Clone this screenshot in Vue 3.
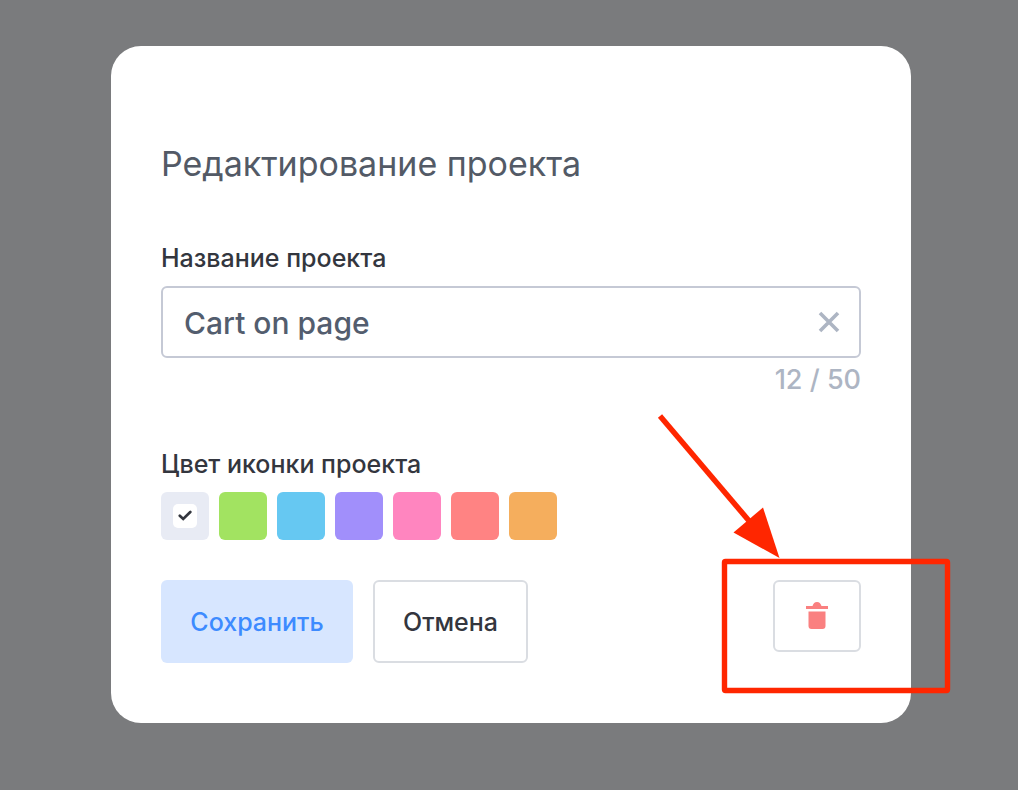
<script setup>
import { computed, ref } from 'vue'

const name = ref('Cart on page')
const limit = 50
const count = computed(() => name.value.length)

const colors = [
  { id: 'grey', label: 'Серый', value: '#e8ebf4' },
  { id: 'green', label: 'Зелёный', value: '#a2e361' },
  { id: 'blue', label: 'Голубой', value: '#66c8f2' },
  { id: 'violet', label: 'Фиолетовый', value: '#a18ffb' },
  { id: 'pink', label: 'Розовый', value: '#ff85bf' },
  { id: 'red', label: 'Красный', value: '#ff8383' },
  { id: 'orange', label: 'Оранжевый', value: '#f5ae5d' },
]
const selected = ref('grey')
</script>

<template>
  <main class="backdrop">
    <form class="dialog" role="dialog" aria-labelledby="dialog-title" @submit.prevent>
      <h1 id="dialog-title" class="title">Редактирование проекта</h1>

      <label class="label" for="project-name">Название проекта</label>
      <div class="field">
        <input id="project-name" v-model="name" class="input" type="text" :maxlength="limit" />
        <button class="clear" type="button" aria-label="Очистить" @click="name = ''">
          <svg width="22" height="22" viewBox="0 0 22 22" aria-hidden="true">
            <path d="M2 2 20 20M20 2 2 20" fill="none" stroke="#adb5c3" stroke-width="3.6" />
          </svg>
        </button>
      </div>
      <div class="counter">{{ count }} / {{ limit }}</div>

      <fieldset class="colors">
        <legend class="label">Цвет иконки проекта</legend>
        <div class="swatches">
          <label v-for="c in colors" :key="c.id" class="swatch" :style="{ background: c.value }">
            <input v-model="selected" class="radio" type="radio" name="color" :value="c.id" :aria-label="c.label" />
            <span v-if="selected === c.id" class="tick">
              <svg width="14" height="12" viewBox="0 0 14 12" aria-hidden="true">
                <path d="M1.800 5.800 5.200 9 12.300 2" fill="none" stroke="#33363e" stroke-width="2.700" stroke-linecap="round" />
              </svg>
            </span>
          </label>
        </div>
      </fieldset>

      <div class="actions">
        <button class="btn save" type="submit">Сохранить</button>
        <button class="btn cancel" type="button">Отмена</button>
        <div class="remove-wrap">
          <button class="remove" type="button" aria-label="Удалить проект">
            <svg width="24" height="28" viewBox="0 0 24 28" aria-hidden="true">
              <path
                d="M1 4H7.500C8.500 1.500 9.500 0 12 0S15.500 1.500 16.500 4H23V7H1ZM3.500 9.500H20.500V24Q20.500 27 17.500 27H6.500Q3.500 27 3.500 24Z"
                fill="#fa8080"
              />
            </svg>
          </button>
          <svg class="callout" width="310" height="300" viewBox="0 0 310 300" aria-hidden="true">
            <path d="M10 16 100 122" fill="none" stroke="#ff2600" stroke-width="5.500" />
            <path d="M129.500 158 113 107.500 83.500 132.500Z" fill="#ff2600" />
            <rect x="74.500" y="161.500" width="223" height="129" rx="1" fill="none" stroke="#ff2600" stroke-width="5.400" />
          </svg>
        </div>
      </div>
    </form>
  </main>
</template>

<style>
body {
  margin: 0;
  background: #7a7b7d;
}
</style>

<style scoped>
.backdrop {
  box-sizing: border-box;
  min-height: 100vh;
  padding: 46px 107px 67px 111px;
  background: #7a7b7d;
  font-family: Inter, "Noto Sans", sans-serif;
}
.dialog {
  padding: 96px 50px 60px;
  border-radius: 30px;
  background: #fff;
}
.title {
  margin: 0 0 56px;
  color: #535a66;
  font-size: 34px;
  font-weight: 400;
  line-height: 44px;
}
.label {
  display: block;
  padding: 0;
  color: #33363e;
  font-size: 25px;
  font-weight: 500;
  line-height: 32px;
}
.field {
  display: flex;
  align-items: center;
  box-sizing: border-box;
  height: 72px;
  margin-top: 12px;
  padding: 0 19px 0 21px;
  border: 2px solid #c5c9d5;
  border-radius: 6px;
}
.input {
  flex: 1;
  min-width: 0;
  padding: 2px 0 0;
  border: 0;
  outline: 0;
  background: none;
  color: #535d6e;
  font: 500 30px/40px Inter, "Noto Sans", sans-serif;
}
.clear {
  display: flex;
  padding: 0;
  border: 0;
  background: none;
}
.counter {
  margin-top: 6px;
  color: #adb5c3;
  font-size: 27px;
  font-weight: 500;
  line-height: 32px;
  text-align: right;
}
.colors {
  min-width: 0;
  margin: 52px 0 0;
  padding: 0;
  border: 0;
}
.swatches {
  display: flex;
  gap: 10px;
  padding-top: 12px;
}
.swatch {
  display: grid;
  place-items: center;
  width: 48px;
  height: 48px;
  border-radius: 6px;
}
.radio {
  grid-area: 1 / 1;
  width: 100%;
  height: 100%;
  margin: 0;
  appearance: none;
}
.tick {
  display: grid;
  grid-area: 1 / 1;
  place-items: center;
  width: 24px;
  height: 24px;
  border-radius: 5px;
  background: #fff;
}
.actions {
  display: flex;
  align-items: flex-start;
  gap: 20px;
  margin-top: 40px;
}
.btn {
  box-sizing: border-box;
  height: 83px;
  padding: 0;
  border-radius: 6px;
  font: 500 25px/32px Inter, "Noto Sans", sans-serif;
}
.save {
  width: 192px;
  border: 0;
  background: #d7e6ff;
  color: #3d8bff;
}
.cancel {
  width: 155px;
  border: 2px solid #dadde2;
  background: #fff;
  color: #33363e;
}
.remove-wrap {
  position: relative;
  margin-left: auto;
}
.remove {
  display: grid;
  place-items: center;
  box-sizing: border-box;
  width: 88px;
  height: 72px;
  padding: 0;
  border: 2px solid #dadde2;
  border-radius: 6px;
  background: #fff;
}
.callout {
  position: absolute;
  top: -180px;
  left: -123px;
  pointer-events: none;
}
</style>
